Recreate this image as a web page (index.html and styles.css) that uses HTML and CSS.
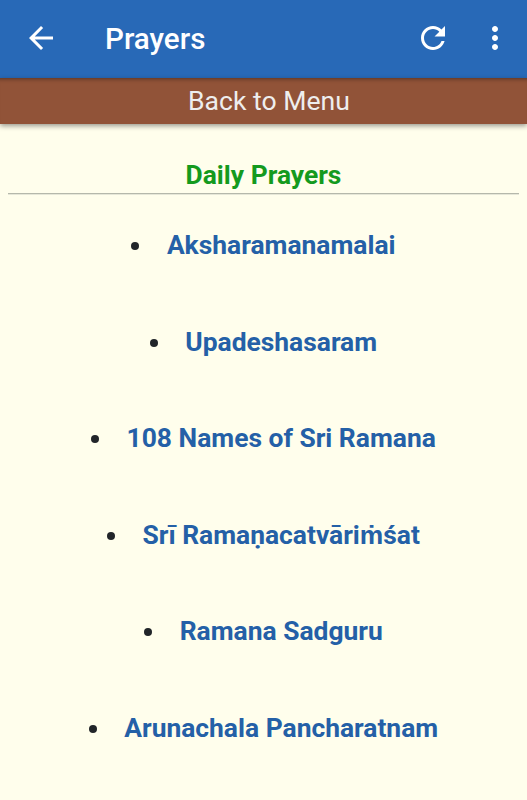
FILE: index.html
```
<!DOCTYPE html>
<html lang="en">
<head>
    <meta charset="UTF-8">
    <meta name="viewport" content="width=device-width, initial-scale=1.0">
    <title>Prayers</title>
    <link rel="stylesheet" href="styles.css">
</head>
<body>
    <header class="app-bar">
        <button class="icon-btn back-btn" aria-label="Back">
            <svg viewBox="0 0 24 24"><path d="M20 11H7.83l5.59-5.59L12 4l-8 8 8 8 1.41-1.41L7.83 13H20v-2z"/></svg>
        </button>
        <h1>Prayers</h1>
        <button class="icon-btn refresh-btn" aria-label="Refresh">
            <svg viewBox="0 0 24 24"><path d="M17.65 6.35C16.2 4.9 14.21 4 12 4c-4.42 0-7.99 3.58-7.99 8s3.57 8 7.99 8c3.73 0 6.84-2.55 7.73-6h-2.08c-.82 2.33-3.04 4-5.65 4-3.31 0-6-2.69-6-6s2.69-6 6-6c1.66 0 3.14.69 4.22 1.78L13 11h7V4l-2.35 2.35z"/></svg>
        </button>
        <button class="icon-btn more-btn" aria-label="More options">
            <svg viewBox="0 0 24 24"><path d="M12 8c1.1 0 2-.9 2-2s-.9-2-2-2-2 .9-2 2 .9 2 2 2zm0 2c-1.1 0-2 .9-2 2s.9 2 2 2 2-.9 2-2-.9-2-2-2zm0 6c-1.1 0-2 .9-2 2s.9 2 2 2 2-.9 2-2-.9-2-2-2z"/></svg>
        </button>
    </header>
    <a class="menu-link" href="#">Back to Menu</a>

    <main>
        <h2>Daily Prayers</h2>
        <ul class="prayer-list">
            <li><a href="#">Aksharamanamalai</a></li>
            <li><a href="#">Upadeshasaram</a></li>
            <li><a href="#">108 Names of Sri Ramana</a></li>
            <li><a href="#">Srī Ramaṇacatvāriṁśat</a></li>
            <li><a href="#">Ramana Sadguru</a></li>
            <li><a href="#">Arunachala Pancharatnam</a></li>
        </ul>
    </main>
</body>
</html>
```
FILE: styles.css
```
* {
    box-sizing: border-box;
}
body {
    margin: 0;
    min-height: 100vh;
    background: #fffeec;
    color: #212529;
    font-family: Roboto, sans-serif;
    font-size: 26.4px;
    overflow: hidden;
}
.app-bar {
    display: flex;
    align-items: center;
    height: 78px;
    padding: 0 14px 3px 23px;
    background: #2869b7;
    color: #ffffff;
}
.app-bar h1 {
    flex: 1;
    margin: 0 0 0 46px;
    padding-top: 3px;
    font-size: 29.6px;
    font-weight: 500;
}
.icon-btn {
    display: block;
    padding: 0;
    border: none;
    background: none;
    cursor: pointer;
}
.icon-btn svg {
    display: block;
    width: 36px;
    height: 36px;
    fill: #ffffff;
}
.refresh-btn {
    margin-right: 26px;
}
.menu-link {
    display: block;
    height: 46px;
    background: #915338;
    color: #eeeeee;
    font-size: 26.6px;
    line-height: 46px;
    padding-left: 11px;
    text-align: center;
    text-decoration: none;
    box-shadow: 0 2px 5px rgba(0, 0, 0, 0.4), inset 0 5px 4px -4px rgba(0, 0, 0, 0.4);
}
main {
    padding: 36px 8px 0;
}
h2 {
    margin: 0;
    height: 34px;
    border-bottom: 1px solid #b5b8ab;
    box-shadow: 0 1px 0 #e6e7d8;
    color: #149a1e;
    font-size: 26.4px;
    font-weight: 700;
    line-height: 31px;
    text-align: center;
}
.prayer-list {
    margin: 31px 0 0;
    padding: 0;
    list-style-position: inside;
    text-align: center;
}
.prayer-list li {
    height: 40px;
    margin-bottom: 56.6px;
    line-height: 40px;
}
.prayer-list a {
    color: #2460a7;
    font-weight: 700;
    text-decoration: none;
}
```
